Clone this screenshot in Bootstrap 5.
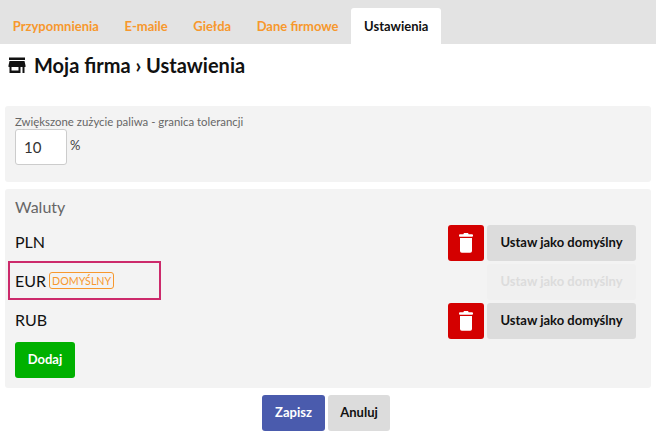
<!DOCTYPE html>
<html lang="pl">
<head>
    <meta charset="UTF-8">
    <meta name="viewport" content="width=device-width, initial-scale=1.0">
    <title>Moja firma - Ustawienia</title>
    <link href="https://cdn.jsdelivr.net/npm/bootstrap@5.3.0/dist/css/bootstrap.min.css" rel="stylesheet">
    <style>
        body {
            font-family: Lato, "Liberation Sans", sans-serif;
            color: #111;
            background: #fff;
        }

        .tabs-bar {
            background: #e3e3e3;
            height: 44px;
            padding-top: 8px;
        }

        .tab-link {
            display: block;
            height: 36px;
            line-height: 36px;
            padding: 0 12.75px;
            font-size: 13px;
            font-weight: 700;
            color: #f7982d;
            text-decoration: none;
        }

        .tab-link.current {
            background: #fff;
            color: #111;
            border-radius: 3px 3px 0 0;
        }

        .page-title {
            font-size: 20px;
            font-weight: 700;
            line-height: 24px;
            margin: 9px 0 29px 8px;
            color: #111;
        }

        .panel-box {
            background: #f3f3f3;
            border-radius: 3px;
            margin: 0 5px 7px;
            padding: 0 15px 0 10px;
        }

        .fuel-box {
            height: 76px;
            padding-top: 8px;
        }

        .fuel-label {
            font-size: 11.4px;
            line-height: 15px;
            color: #666;
        }

        .fuel-input {
            width: 52px;
            height: 36px;
            border: 1px solid #ccc;
            border-radius: 3px;
            background: #fff;
            padding: 0 8px;
            font-size: 15px;
            color: #333;
            font-family: inherit;
        }

        .percent-sign {
            font-size: 13px;
            color: #444;
            margin: 7px 0 0 3px;
        }

        .currency-box {
            height: 199px;
            padding-top: 8px;
        }

        .currency-title {
            font-size: 16px;
            line-height: 20px;
            color: #666;
            margin-bottom: 5px;
        }

        .currency-row {
            height: 39px;
            font-size: 16px;
        }

        .default-box {
            width: 153px;
            height: 39px;
            margin-left: -7px;
            padding-left: 5px;
            border: 2px solid #cc2a6b;
        }

        .default-tag {
            font-size: 10.7px;
            line-height: 15px;
            color: #f7982d;
            border: 1px solid #f7982d;
            border-radius: 3px;
            padding: 0 2px;
            margin-left: 3px;
        }

        .action-btn {
            font-size: 13px;
            font-weight: 700;
            border: 0;
            border-radius: 3px;
            height: 36px;
            padding: 0 13px;
            font-family: inherit;
        }

        .btn-pair {
            gap: 3px;
        }

        .grey-btn {
            background: #dcdcdc;
            color: #111;
        }

        .grey-btn:disabled {
            background: #f0f0f0;
            color: #dcdcdc;
        }

        .set-btn {
            width: 149px;
            padding: 0;
        }

        .trash-btn {
            width: 36px;
            padding: 0;
            background: #d40000;
        }

        .add-btn {
            width: 60px;
            padding: 0;
            background: #00b000;
            color: #fff;
            margin-top: 3px;
        }

        .form-actions {
            margin-right: 4px;
        }

        .save-btn {
            width: 63px;
            padding: 0;
            background: #4a5bad;
            color: #fff;
        }

        .cancel-btn {
            width: 62px;
            padding: 0;
        }
    </style>
</head>
<body>
    <nav class="tabs-bar d-flex">
        <a href="#" class="tab-link">Przypomnienia</a>
        <a href="#" class="tab-link">E-maile</a>
        <a href="#" class="tab-link">Giełda</a>
        <a href="#" class="tab-link">Dane firmowe</a>
        <a href="#" class="tab-link current">Ustawienia</a>
    </nav>

    <h1 class="page-title d-flex align-items-center gap-2">
        <svg width="18" height="18" viewBox="0 0 18 18" fill="#111">
            <rect x="1" y="1.500" width="16" height="2.500"/>
            <path d="M1.500 5h15l1 4.500v1.500h-1v6h-2v-6H3.500v3.500h7V11h2v6H1.500v-6h-1V9.500z" fill-rule="evenodd"/>
        </svg>
        Moja firma › Ustawienia
    </h1>

    <section class="panel-box fuel-box">
        <div class="fuel-label">Zwiększone zużycie paliwa - granica tolerancji</div>
        <div class="d-flex">
            <input type="text" class="fuel-input" value="10">
            <span class="percent-sign">%</span>
        </div>
    </section>

    <section class="panel-box currency-box">
        <div class="currency-title">Waluty</div>

        <div class="currency-row d-flex align-items-end justify-content-between">
            <span class="align-self-center">PLN</span>
            <div class="btn-pair d-flex">
                <button type="button" class="action-btn trash-btn d-flex align-items-center justify-content-center">
                    <svg width="14" height="20" viewBox="0 0 14 20" fill="#fff">
                        <path d="M5 0h4l.7 1.300H13a1 1 0 0 1 0 2.400H1a1 1 0 0 1 0-2.400h3.300z"/>
                        <path d="M1 5h12v13a1.800 1.800 0 0 1-1.800 1.800H2.800A1.800 1.800 0 0 1 1 18z"/>
                    </svg>
                </button>
                <button type="button" class="action-btn grey-btn set-btn">Ustaw jako domyślny</button>
            </div>
        </div>

        <div class="currency-row d-flex align-items-end justify-content-between">
            <div class="default-box d-flex align-items-center">
                <span>EUR</span>
                <span class="default-tag">DOMYŚLNY</span>
            </div>
            <button type="button" class="action-btn grey-btn set-btn" disabled>Ustaw jako domyślny</button>
        </div>

        <div class="currency-row d-flex align-items-end justify-content-between">
            <span class="align-self-center">RUB</span>
            <div class="btn-pair d-flex">
                <button type="button" class="action-btn trash-btn d-flex align-items-center justify-content-center">
                    <svg width="14" height="20" viewBox="0 0 14 20" fill="#fff">
                        <path d="M5 0h4l.7 1.300H13a1 1 0 0 1 0 2.400H1a1 1 0 0 1 0-2.400h3.300z"/>
                        <path d="M1 5h12v13a1.800 1.800 0 0 1-1.800 1.800H2.800A1.800 1.800 0 0 1 1 18z"/>
                    </svg>
                </button>
                <button type="button" class="action-btn grey-btn set-btn">Ustaw jako domyślny</button>
            </div>
        </div>

        <button type="button" class="action-btn add-btn">Dodaj</button>
    </section>

    <div class="form-actions btn-pair d-flex justify-content-center">
        <button type="button" class="action-btn save-btn">Zapisz</button>
        <button type="button" class="action-btn grey-btn cancel-btn">Anuluj</button>
    </div>

    <script src="https://cdn.jsdelivr.net/npm/bootstrap@5.3.0/dist/js/bootstrap.bundle.min.js"></script>
</body>
</html>
